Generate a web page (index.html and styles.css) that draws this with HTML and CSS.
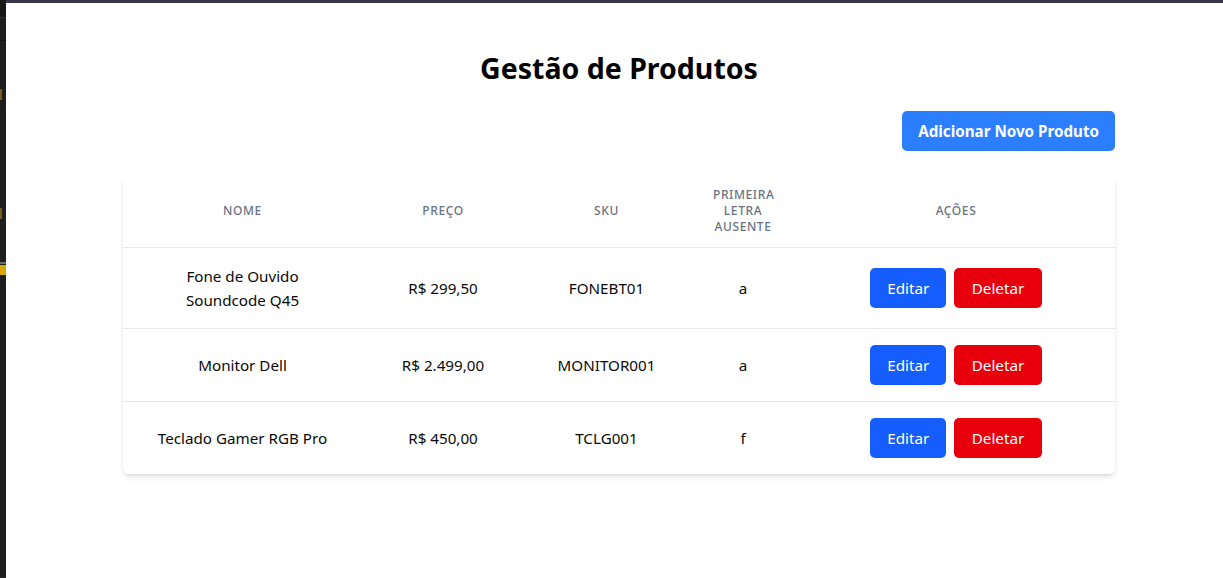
FILE: index.html
```html
<!DOCTYPE html>
<html lang="pt-BR">
<head>
<meta charset="utf-8">
<title>Gestão de Produtos</title>
<link rel="stylesheet" href="styles.css">
</head>
<body>
<div class="frame">
  <aside class="strip">
    <div class="strip-top"></div>
    <div class="strip-sep light"></div>
    <div class="strip-gap g1"></div>
    <div class="strip-sep dark"></div>
    <div class="strip-gap g2"></div>
    <div class="mark brown"></div>
    <div class="strip-gap g3"></div>
    <div class="mark brown"></div>
    <div class="strip-gap g4"></div>
    <div class="strip-sep grey"></div>
    <div class="mark yellow"></div>
    <div class="strip-fill"></div>
    <div class="strip-sep grey2"></div>
  </aside>
  <div class="window">
    <div class="topbar"></div>
    <main class="page">
      <div class="container">
        <h1 class="title">Gestão de Produtos</h1>
        <div class="toolbar">
          <button class="btn btn-add">Adicionar Novo Produto</button>
        </div>
        <div class="card">
          <table class="products">
            <colgroup>
              <col class="c1"><col class="c2"><col class="c3"><col class="c4"><col class="c5">
            </colgroup>
            <thead>
              <tr>
                <th>Nome</th>
                <th>Preço</th>
                <th>SKU</th>
                <th>Primeira Letra Ausente</th>
                <th>Ações</th>
              </tr>
            </thead>
            <tbody>
              <tr>
                <td>Fone de Ouvido Soundcode Q45</td>
                <td>R$ 299,50</td>
                <td>FONEBT01</td>
                <td>a</td>
                <td><div class="actions"><button class="btn btn-edit">Editar</button><button class="btn btn-del">Deletar</button></div></td>
              </tr>
              <tr>
                <td>Monitor Dell</td>
                <td>R$ 2.499,00</td>
                <td>MONITOR001</td>
                <td>a</td>
                <td><div class="actions"><button class="btn btn-edit">Editar</button><button class="btn btn-del">Deletar</button></div></td>
              </tr>
              <tr>
                <td>Teclado Gamer RGB Pro</td>
                <td>R$ 450,00</td>
                <td>TCLG001</td>
                <td>f</td>
                <td><div class="actions"><button class="btn btn-edit">Editar</button><button class="btn btn-del">Deletar</button></div></td>
              </tr>
            </tbody>
          </table>
        </div>
      </div>
    </main>
  </div>
</div>
</body>
</html>
```

FILE: styles.css
```css
* { box-sizing: border-box; }
html, body { margin: 0; padding: 0; height: 100%; }
body {
  font-family: "Noto Sans", "Open Sans", sans-serif;
  color: #0a0a0a;
  background: #fff;
  overflow: hidden;
}
.frame { display: flex; height: 578px; }
.strip {
  width: 6px;
  flex: none;
  display: flex;
  flex-direction: column;
  background: #1e1e1e;
}
.strip-top { height: 17px; background: #181818; }
.strip-sep { height: 1px; }
.strip-sep.light { background: #2f2f2f; }
.strip-sep.dark { background: #121212; }
.strip-sep.grey { background: #6b6b6b; height: 2px; }
.strip-sep.grey2 { background: #2c2c2c; }
.strip-gap.g1 { height: 22px; }
.strip-gap.g2 { height: 48px; }
.strip-gap.g3 { height: 108px; }
.strip-gap.g4 { height: 43px; }
.mark { height: 11px; width: 2px; }
.mark.brown { background: #7a5a1e; }
.mark.yellow { background: #d6a600; width: 6px; height: 10px; margin-top: 1px; }
.strip-fill { flex: 1; }
.window { flex: 1; display: flex; flex-direction: column; min-width: 0; }
.topbar { height: 3px; background: #3b3549; flex: none; }
.page { flex: 1; padding: 47px 108px 0 117px; }
.container { width: 992px; }
.title {
  margin: 0 0 25px;
  text-align: center;
  font-size: 28.5px;
  line-height: 36px;
  font-weight: 700;
  color: #000;
}
.toolbar { display: flex; justify-content: flex-end; margin-bottom: 24px; }
.btn {
  font-family: inherit;
  border: none;
  color: #fff;
  height: 40px;
  padding: 0 16px;
  border-radius: 5px;
  font-size: 15.2px;
  cursor: pointer;
}
.btn-add { background: #2b7fff; font-weight: 700; padding: 0 16px; }
.btn-edit { background: #155dfc; padding: 0 17px; }
.btn-del { background: #e7000b; padding: 0 17.5px; }
.card {
  background: #fff;
  border-radius: 6px;
  box-shadow: 0 4px 6px -1px rgba(0,0,0,0.1), 0 2px 4px -2px rgba(0,0,0,0.1);
  overflow: hidden;
}
.products { width: 100%; border-collapse: collapse; table-layout: fixed; }
.c1 { width: 239px; }
.c2 { width: 162px; }
.c3 { width: 165px; }
.c4 { width: 108px; }
.c5 { width: 318px; }
.products th {
  padding: 12px 24px;
  font-size: 12px;
  line-height: 16px;
  font-weight: 500;
  letter-spacing: 0.05em;
  text-transform: uppercase;
  color: #6a7282;
  text-align: center;
  border-bottom: 1px solid #e5e7eb;
}
.products td {
  padding: 16px 24px;
  font-size: 15.2px;
  line-height: 24px;
  text-align: center;
  border-bottom: 1px solid #e5e7eb;
}
.products tbody tr:last-child td { border-bottom: none; }
.actions { display: flex; justify-content: center; gap: 8px; }
```
